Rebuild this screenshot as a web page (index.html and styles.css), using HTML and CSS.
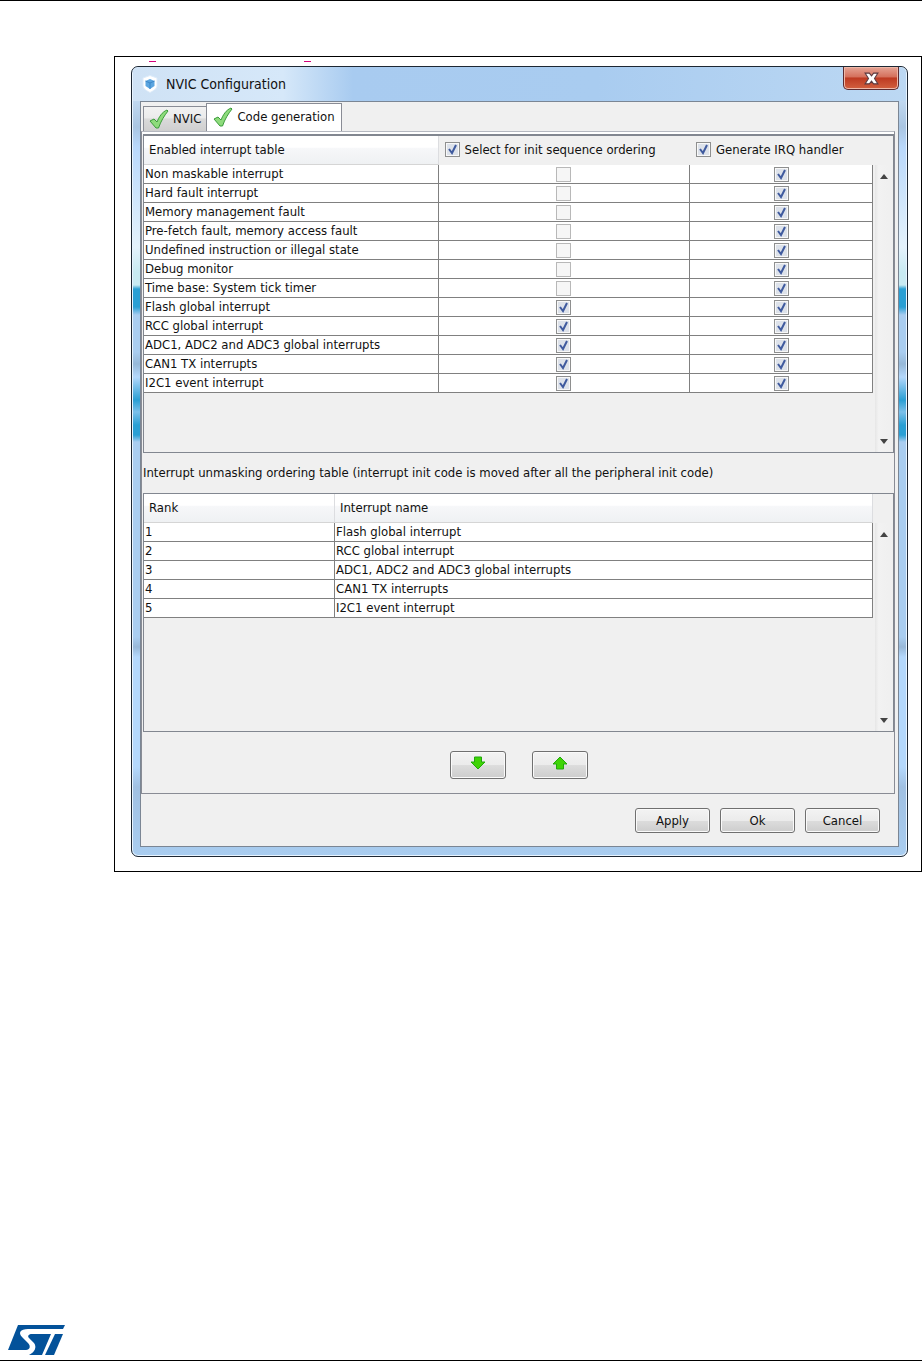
FILE: index.html
```html
<!DOCTYPE html>
<html lang="en">
<head>
    <meta charset="UTF-8">
    <meta name="viewport" content="width=device-width, initial-scale=1.0">
    <title>NVIC Configuration</title>
    <link rel="stylesheet" href="styles.css">
</head>
<body>
<main class="figure">
    <div class="caption-marks"><span></span><span></span></div>
    <section class="window">
        <header class="titlebar">
            <svg class="app-icon" viewBox="0 0 16 18">
                <path d="M8 0.500L15 3v8c0 3-4 5-7 6.500C5 16 1 14 1 11V3z" fill="#fff" stroke="#dcebfa"/>
                <path d="M8 4l4.500 2v5L8 14l-4.500-3V6z" fill="#5ba5e0"/>
                <path d="M3.500 6L8 8l4.500-2M8 8v6" fill="none" stroke="#3b86c8"/>
            </svg>
            <h1>NVIC Configuration</h1>
            <button class="close" type="button" aria-label="Close">
                <svg viewBox="0 0 14 12"><path d="M1 1h4l2 2.500L9 1h4L9.800 6l3.200 5H9L7 8.500 5 11H1L4.200 6z" fill="#fff" stroke="#5b3a40"/></svg>
            </button>
        </header>
        <div class="content">
            <nav class="tabs">
                <button class="tab" type="button">
                    <svg class="tick" viewBox="0 0 20 20"><path d="M1 12l4-2 3 3C10 8 13 3 18 1l1 1C15 7 12 12 9.500 19H7z" fill="#8edb7c" stroke="#3a9c3a"/></svg>
                    NVIC
                </button>
                <button class="tab active" type="button">
                    <svg class="tick" viewBox="0 0 20 20"><path d="M1 12l4-2 3 3C10 8 13 3 18 1l1 1C15 7 12 12 9.500 19H7z" fill="#8edb7c" stroke="#3a9c3a"/></svg>
                    Code generation
                </button>
            </nav>
            <div class="panel">
                <div class="pane">
                    <table class="enabled">
                        <thead>
                        <tr>
                            <th class="raised">Enabled interrupt table</th>
                            <th><label><input type="checkbox" checked>Select for init sequence ordering</label></th>
                            <th><label><input type="checkbox" checked>Generate IRQ handler</label></th>
                        </tr>
                        </thead>
                        <tbody>
                        <tr><td>Non maskable interrupt</td><td><input type="checkbox" aria-label="Select" disabled></td><td><input type="checkbox" aria-label="Generate" checked></td></tr>
                        <tr><td>Hard fault interrupt</td><td><input type="checkbox" aria-label="Select" disabled></td><td><input type="checkbox" aria-label="Generate" checked></td></tr>
                        <tr><td>Memory management fault</td><td><input type="checkbox" aria-label="Select" disabled></td><td><input type="checkbox" aria-label="Generate" checked></td></tr>
                        <tr><td>Pre-fetch fault, memory access fault</td><td><input type="checkbox" aria-label="Select" disabled></td><td><input type="checkbox" aria-label="Generate" checked></td></tr>
                        <tr><td>Undefined instruction or illegal state</td><td><input type="checkbox" aria-label="Select" disabled></td><td><input type="checkbox" aria-label="Generate" checked></td></tr>
                        <tr><td>Debug monitor</td><td><input type="checkbox" aria-label="Select" disabled></td><td><input type="checkbox" aria-label="Generate" checked></td></tr>
                        <tr><td>Time base: System tick timer</td><td><input type="checkbox" aria-label="Select" disabled></td><td><input type="checkbox" aria-label="Generate" checked></td></tr>
                        <tr><td>Flash global interrupt</td><td><input type="checkbox" aria-label="Select" checked></td><td><input type="checkbox" aria-label="Generate" checked></td></tr>
                        <tr><td>RCC global interrupt</td><td><input type="checkbox" aria-label="Select" checked></td><td><input type="checkbox" aria-label="Generate" checked></td></tr>
                        <tr><td>ADC1, ADC2 and ADC3 global interrupts</td><td><input type="checkbox" aria-label="Select" checked></td><td><input type="checkbox" aria-label="Generate" checked></td></tr>
                        <tr><td>CAN1 TX interrupts</td><td><input type="checkbox" aria-label="Select" checked></td><td><input type="checkbox" aria-label="Generate" checked></td></tr>
                        <tr><td>I2C1 event interrupt</td><td><input type="checkbox" aria-label="Select" checked></td><td><input type="checkbox" aria-label="Generate" checked></td></tr>
                        </tbody>
                    </table>
                    <div class="scrollbar">
                        <svg viewBox="0 0 8 5"><path d="M0 5l4-5 4 5z" fill="#444"/></svg>
                        <svg viewBox="0 0 8 5"><path d="M0 0l4 5 4-5z" fill="#444"/></svg>
                    </div>
                </div>
                <p class="note">Interrupt unmasking ordering table (interrupt init code is moved after all the peripheral init code)</p>
                <div class="pane ordering-pane">
                    <table class="ordering">
                        <thead>
                        <tr><th class="raised">Rank</th><th class="raised">Interrupt name</th></tr>
                        </thead>
                        <tbody>
                        <tr><td>1</td><td>Flash global interrupt</td></tr>
                        <tr><td>2</td><td>RCC global interrupt</td></tr>
                        <tr><td>3</td><td>ADC1, ADC2 and ADC3 global interrupts</td></tr>
                        <tr><td>4</td><td>CAN1 TX interrupts</td></tr>
                        <tr><td>5</td><td>I2C1 event interrupt</td></tr>
                        </tbody>
                    </table>
                    <div class="scrollbar">
                        <svg viewBox="0 0 8 5"><path d="M0 5l4-5 4 5z" fill="#444"/></svg>
                        <svg viewBox="0 0 8 5"><path d="M0 0l4 5 4-5z" fill="#444"/></svg>
                    </div>
                </div>
                <div class="move">
                    <button class="btn" type="button" aria-label="Move down">
                        <svg viewBox="0 0 16 14"><path d="M4.500 1h7v5h3.500L8 13 1 6h3.500z" fill="#3fd406" stroke="#22a80c"/></svg>
                    </button>
                    <button class="btn" type="button" aria-label="Move up">
                        <svg viewBox="0 0 16 14"><path d="M4.500 13h7V8h3.500L8 1 1 8h3.500z" fill="#3fd406" stroke="#22a80c"/></svg>
                    </button>
                </div>
            </div>
            <div class="actions">
                <button class="btn" type="button">Apply</button>
                <button class="btn" type="button">Ok</button>
                <button class="btn" type="button">Cancel</button>
            </div>
        </div>
    </section>
</main>
<footer class="page-footer">
    <svg class="logo" viewBox="0 0 58 31">
        <g fill="#03529a">
            <path d="M10 0h47l-2 4H20c-8 0-10 4-6 8l6 6c3 3 2 7-2 7H0z"/>
            <path d="M24 9h19l-9 21H21c6-3 8-8 5-12l-5-5c-2-2 0-4 3-4z"/>
            <path d="M47 9h8l-9 21h-9z"/>
        </g>
    </svg>
</footer>
</body>
</html>
```
FILE: styles.css
```css
* {
    margin: 0;
    padding: 0;
    box-sizing: border-box;
}

body {
    min-height: 100vh;
    display: flex;
    flex-direction: column;
    border-top: 1px solid #000;
    background-color: #fff;
    color: #111;
    font-family: "DejaVu Sans Condensed", Tahoma, "DejaVu Sans", sans-serif;
    font-size: 13px;
    line-height: 16px;
}

button,
input {
    font: inherit;
    color: inherit;
}

.figure {
    margin: 55px 0 0 114px;
    padding: 4px 13px 14px 16px;
    border: 1px solid #000;
}

/* bottom of the cut-off caption line */
.caption-marks {
    display: flex;
    gap: 148px;
    height: 5px;
    padding-left: 18px;
}

.caption-marks span {
    width: 7px;
    height: 1px;
    background-color: #d4007a;
}

/* window frame */
.window {
    padding: 0 8px 9px;
    border: 1px solid #1d2733;
    border-radius: 7px;
    background: linear-gradient(#c0d8f0 34px, #a9c5e2 60px, #b9d8fb 80px, #e4f2fc 180px, #c8eaf2 205px, #c8eaf2 218px, #2a9fd4 222px, #2a9fd4 240px, #a9cdf0 248px, #a9cdf0 285px, #96b8d8 297px, #b4d8fc 310px, #2a9fd4 333px, #7cc0ea 345px, #2a9fd4 358px, #2a9fd4 368px, #a9cdf0 375px, #a9cdf0 570px, #98b8d8 580px, #b4d8fc 590px, #b4d8fc 700px, #a0c0e2 720px, #a9cdf0);
    box-shadow: inset 0 0 0 1px #e8f4ff;
}

.titlebar {
    display: flex;
    align-items: center;
    height: 34px;
    margin: 0 -7px;
    padding: 0 7px 0 9px;
    border-radius: 6px 6px 0 0;
    background: linear-gradient(90deg, #cfe2f5, #d6e8f9 150px, #a8cbf0 220px, #a9ccf0 60%, #bcd8f3);
}

.app-icon {
    width: 16px;
    height: 18px;
}

.titlebar h1 {
    flex: 1;
    padding-left: 8px;
    font-size: 14px;
    font-weight: normal;
}

.close {
    align-self: flex-start;
    width: 56px;
    height: 23px;
    border: 1px solid #5c2b30;
    border-top: 0;
    border-radius: 0 0 5px 5px;
    background: linear-gradient(#e5a495, #d5705c 45%, #bd3a22 50%, #d2603f);
    box-shadow: inset 0 0 0 1px #efb8a8;
}

.close svg {
    display: block;
    width: 15px;
    height: 13px;
    margin: 0 auto;
}

.content {
    border: 1px solid #7b8694;
    background-color: #f0f0f0;
}

/* tabs */
.tabs {
    display: flex;
    align-items: flex-end;
    height: 29px;
    padding: 1px 2px 0;
}

.tab {
    display: flex;
    align-items: center;
    gap: 4px;
    height: 25px;
    padding: 0 5px;
    border: 1px solid #898c95;
    border-bottom: 0;
    background: linear-gradient(#f2f2f2, #ebebeb 45%, #dadada 50%, #cfcfcf);
}

.tab.active {
    height: 28px;
    margin-left: -1px;
    padding: 0 6px 2px;
    background: #fff;
}

.tick {
    width: 20px;
    height: 20px;
}

.panel {
    margin-right: 3px;
    padding: 2px 0 14px 1px;
    border: 1px solid #898c95;
    border-top-color: #b5b8c0;
    box-shadow: inset 0 3px 0 #fff;
}

.pane {
    display: flex;
    min-height: 319px;
    border: 1px solid #828790;
    border-top-width: 2px;
}

.ordering-pane {
    min-height: 239px;
    border-top-width: 1px;
}

/* tables */
table {
    flex: 1;
    align-self: flex-start;
    table-layout: fixed;
    border-collapse: separate;
    border-spacing: 0;
}

th {
    height: 29px;
    padding: 0 1px 2px;
    font-weight: normal;
    text-align: left;
}

th.raised {
    padding: 0 0 0 5px;
    border-right: 1px solid #dcdde0;
    border-bottom: 1px solid #d5d5d5;
    background: linear-gradient(#fff 40%, #f6f7f9 45%, #eff1f3);
}

th label {
    display: flex;
    align-items: center;
    gap: 5px;
    padding-left: 5px;
}

.enabled th:first-child {
    width: 40.4%;
}

.enabled th:nth-child(2) {
    width: 34.5%;
}

.ordering th:first-child {
    width: 26.2%;
}

td {
    height: 19px;
    padding: 0 1px;
    border-right: 1px solid #808080;
    border-bottom: 1px solid #808080;
    background-color: #fff;
    line-height: 18px;
}

input[type="checkbox"] {
    appearance: none;
    width: 15px;
    height: 15px;
    border: 1px solid #8e8f8f;
    background: #e3e7ed;
}

input[type="checkbox"]:checked {
    background: url("data:image/svg+xml,%3Csvg xmlns='http://www.w3.org/2000/svg' viewBox='0 0 13 13'%3E%3Cpath d='M3 6l3 4 4-8' fill='none' stroke='%233f5a9e' stroke-width='2'/%3E%3C/svg%3E") #dde2ea;
    box-shadow: inset 0 0 0 1px #f8f8f8;
}

input[type="checkbox"]:disabled {
    border-color: #b8b8b8;
    background: #f6f6f6;
}

td input[type="checkbox"] {
    display: block;
    margin: 0 auto;
}

.scrollbar {
    display: flex;
    flex-direction: column;
    align-items: center;
    justify-content: space-between;
    width: 18px;
    margin: 29px 0 0 2px;
    padding: 9px 0 8px;
    background: linear-gradient(90deg, #e6e6e6, #f2f2f2 20%, #efefef);
}

.scrollbar svg {
    width: 8px;
    height: 5px;
}

.note {
    height: 40px;
    line-height: 40px;
}

/* buttons */
.btn {
    width: 75px;
    height: 25px;
    border: 1px solid #707070;
    border-radius: 3px;
    background: linear-gradient(#f3f3f3, #ebebeb 50%, #dcdcdc 52%, #cdcdcd);
    box-shadow: inset 0 0 0 1px #fafafa;
}

.move {
    display: flex;
    justify-content: center;
    gap: 26px;
    padding-top: 19px;
}

.move .btn {
    width: 56px;
    height: 28px;
}

.move svg {
    width: 16px;
    height: 14px;
}

.actions {
    display: flex;
    justify-content: flex-end;
    gap: 10px;
    padding: 14px 18px 13px;
}

.page-footer {
    display: flex;
    margin-top: auto;
    padding: 0 8px 4px;
    border-bottom: 1px solid #000;
}

.logo {
    width: 58px;
    height: 31px;
}
```
